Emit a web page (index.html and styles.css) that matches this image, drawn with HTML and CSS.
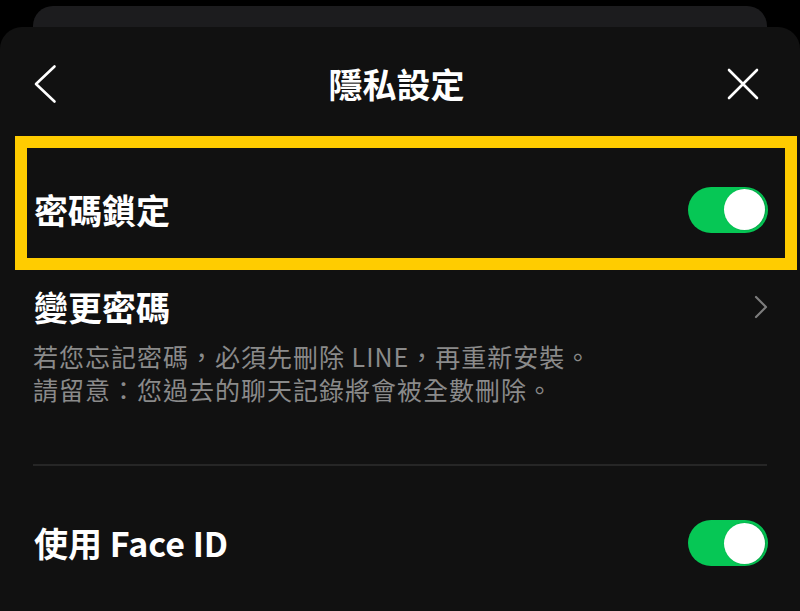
FILE: index.html
```html
<!DOCTYPE html>
<html lang="zh-Hant">
<head>
<meta charset="utf-8">
<title>隱私設定</title>
<link rel="stylesheet" href="styles.css">
</head>
<body>
<div class="backcard"></div>
<div class="sheet">
  <header class="header">
    <svg class="icon-back" width="24" height="40" viewBox="0 0 24 40"><polyline points="21.5,2.5 3,20 21.5,37.5" fill="none" stroke="#fff" stroke-width="2.6" stroke-linecap="round" stroke-linejoin="round"/></svg>
    <h1 class="title">隱私設定</h1>
    <svg class="icon-close" width="34" height="34" viewBox="0 0 34 34"><path d="M3 3 L31 31 M31 3 L3 31" fill="none" stroke="#fff" stroke-width="2.6" stroke-linecap="round"/></svg>
  </header>

  <div class="highlight">
    <div class="row">
      <span class="label">密碼鎖定</span>
      <span class="toggle"><span class="knob"></span></span>
    </div>
  </div>

  <div class="row row-change">
    <span class="label">變更密碼</span>
    <svg class="icon-chev" width="14" height="24" viewBox="0 0 14 24"><polyline points="2,2 12,12 2,22" fill="none" stroke="#7d7d7d" stroke-width="2.2" stroke-linecap="round" stroke-linejoin="round"/></svg>
  </div>
  <div class="desc">
    <p class="desc-line">若您忘記密碼，必須先刪除 LINE，再重新安裝。</p>
    <p class="desc-line">請留意：您過去的聊天記錄將會被全數刪除。</p>
  </div>

  <div class="divider"></div>

  <div class="row row-face">
    <span class="label">使用 Face ID</span>
    <span class="toggle"><span class="knob"></span></span>
  </div>
</div>
</body>
</html>
```
FILE: styles.css
```css
* { box-sizing: border-box; }
html, body {
  margin: 0;
  padding: 0;
  background: #000;
  width: 800px;
  height: 611px;
  overflow: hidden;
  font-family: "Noto Sans CJK TC", "Noto Sans", sans-serif;
}
.backcard {
  margin: 6px 33px 0;
  height: 21px;
  background: #1c1c1e;
  border-radius: 20px 20px 0 0;
}
.sheet {
  background: #111111;
  border-radius: 22px 22px 0 0;
  height: 584px;
  padding-top: 34px;
}
.header {
  display: grid;
  grid-template-columns: 1fr auto 1fr;
  align-items: center;
  height: 46px;
  padding: 0 40px 0 33px;
}
.icon-back { justify-self: start; }
.icon-close { justify-self: end; }
.title {
  margin: 0;
  color: #fff;
  font-size: 34px;
  font-weight: 700;
  line-height: 46px;
}
.highlight {
  margin: 29px 3px 0 15px;
  border: 12px solid #ffcc00;
  height: 134px;
  padding: 13px 17px 0 7px;
}
.highlight .row { height: 97px; }
.row {
  display: flex;
  align-items: center;
  justify-content: space-between;
}
.label {
  color: #fff;
  font-size: 34px;
  font-weight: 700;
  line-height: 48px;
}
.toggle {
  width: 80px;
  height: 46px;
  border-radius: 23px;
  background: #06c755;
  display: flex;
  align-items: center;
  justify-content: flex-end;
  padding-right: 3px;
}
.knob {
  width: 41px;
  height: 41px;
  border-radius: 50%;
  background: #fff;
  box-shadow: 1px 0 2px rgba(0,0,0,0.25);
}
.row-change {
  margin-top: 13px;
  padding: 0 33px 0 34px;
  height: 48px;
}
.icon-chev { margin-right: -1px; }
.desc {
  margin-top: 9px;
  padding: 0 33px;
  display: flex;
  flex-direction: column;
}
.desc-line {
  margin: 0;
  height: 33px;
  color: #8a8a8a;
  font-size: 25px;
  letter-spacing: 1px;
  line-height: 33px;
  font-weight: 400;
  white-space: nowrap;
}
.divider {
  margin: 58px 33px 0;
  height: 2px;
  background: #262626;
}
.row-face {
  margin-top: 53px;
  padding: 0 32px 0 34px;
  height: 48px;
}
```
